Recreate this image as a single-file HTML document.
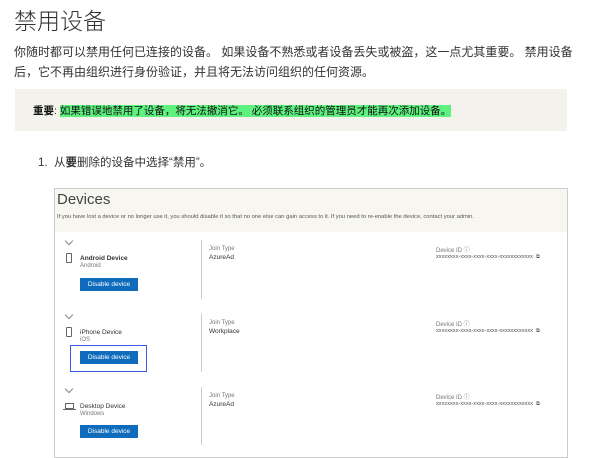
<!DOCTYPE html>
<html><head><meta charset="utf-8"><style>
*{margin:0;padding:0;box-sizing:border-box}
body{width:600px;height:451px;background:#fff;position:relative;overflow:hidden;font-family:"Liberation Sans","Noto Sans CJK SC",sans-serif;color:#222}
.a{position:absolute;white-space:nowrap}
.s{font-size:6.5px;color:#333}
.g{font-size:6px;color:#777}
.btn{position:absolute;width:58px;height:13px;background:#0f6cbd;color:#fff;font-size:6.5px;text-align:center;line-height:13px}
.chev{position:absolute;width:6px;height:6px;border-right:1px solid #888;border-bottom:1px solid #888;transform:rotate(45deg)}
.vl{position:absolute;width:1px;background:#ccc}
.id{font-size:5.6px;color:#555}
</style></head><body>
<div class="a" style="left:14px;top:2px;font-size:23px;color:#333;font-weight:300">禁用设备</div>
<div class="a" style="left:14px;top:42px;font-size:12px;color:#333;line-height:20px">你随时都可以禁用任何已连接的设备。 如果设备不熟悉或者设备丢失或被盗，这一点尤其重要。 禁用设备<br>后，它不再由组织进行身份验证，并且将无法访问组织的任何资源。</div>
<div class="a" style="left:15px;top:89px;width:552px;height:42px;background:#f4f2ec"></div>
<div class="a" style="left:33px;top:103px;font-size:10.5px;color:#111"><b>重要</b>: <span style="background:#5ef17f">如果错误地禁用了设备，将无法撤消它。 必须联系组织的管理员才能再次添加设备。</span></div>
<div class="a" style="left:38px;top:154px;font-size:11.5px;color:#333">1.&nbsp; 从<b>要</b>删除的设备中选择“禁用”。</div>
<div class="a" style="left:54px;top:188px;width:514px;height:270px;border:1px solid #ccc;background:#fff"></div>
<div class="a" style="left:55px;top:189px;width:512px;height:43px;background:#f7f6f0"></div>
<div class="a" style="left:57px;top:191px;font-size:15px;color:#444">Devices</div>
<div class="a" style="left:57px;top:214px;font-size:5.8px;color:#555">If you have lost a device or no longer use it, you should disable it so that no one else can gain access to it. If you need to re-enable the device, contact your admin.</div>

<div class="chev" style="left:66px;top:238px"></div>
<div class="a" style="left:66px;top:253px;width:6px;height:10px;border:1px solid #666;border-radius:1px"></div>
<div class="a s" style="left:80px;top:255px;font-weight:bold">Android Device</div>
<div class="a g" style="left:80px;top:263px">Android</div>
<div class="btn" style="left:80px;top:278px">Disable device</div>
<div class="vl" style="left:201px;top:240px;height:59px"></div>
<div class="a g" style="left:209px;top:246px">Join Type</div>
<div class="a s" style="left:209px;top:254px">AzureAd</div>
<div class="a g" style="left:436px;top:245px">Device ID ⓘ</div>
<div class="a id" style="left:436px;top:254px">xxxxxxxx-xxxx-xxxx-xxxx-xxxxxxxxxxxx &nbsp;⧉</div>

<div class="chev" style="left:66px;top:312px"></div>
<div class="a" style="left:66px;top:327px;width:6px;height:10px;border:1px solid #666;border-radius:1px"></div>
<div class="a s" style="left:80px;top:329px">iPhone Device</div>
<div class="a g" style="left:80px;top:337px">iOS</div>
<div class="a" style="left:70px;top:345px;width:77px;height:27px;border:1.5px solid #3b5be6"></div>
<div class="btn" style="left:80px;top:351px">Disable device</div>
<div class="vl" style="left:201px;top:314px;height:58px"></div>
<div class="a g" style="left:209px;top:320px">Join Type</div>
<div class="a s" style="left:209px;top:328px">Workplace</div>
<div class="a g" style="left:436px;top:319px">Device ID ⓘ</div>
<div class="a id" style="left:436px;top:328px">xxxxxxxx-xxxx-xxxx-xxxx-xxxxxxxxxxxx &nbsp;⧉</div>

<div class="chev" style="left:66px;top:386px"></div>
<div class="a" style="left:65px;top:403px;width:9px;height:6px;border:1px solid #666"></div>
<div class="a" style="left:63px;top:409px;width:13px;height:1px;background:#666"></div>
<div class="a s" style="left:80px;top:403px">Desktop Device</div>
<div class="a g" style="left:80px;top:411px">Windows</div>
<div class="btn" style="left:80px;top:425px">Disable device</div>
<div class="vl" style="left:201px;top:387px;height:58px"></div>
<div class="a g" style="left:209px;top:393px">Join Type</div>
<div class="a s" style="left:209px;top:401px">AzureAd</div>
<div class="a g" style="left:436px;top:392px">Device ID ⓘ</div>
<div class="a id" style="left:436px;top:401px">xxxxxxxx-xxxx-xxxx-xxxx-xxxxxxxxxxxx &nbsp;⧉</div>
</body></html>
